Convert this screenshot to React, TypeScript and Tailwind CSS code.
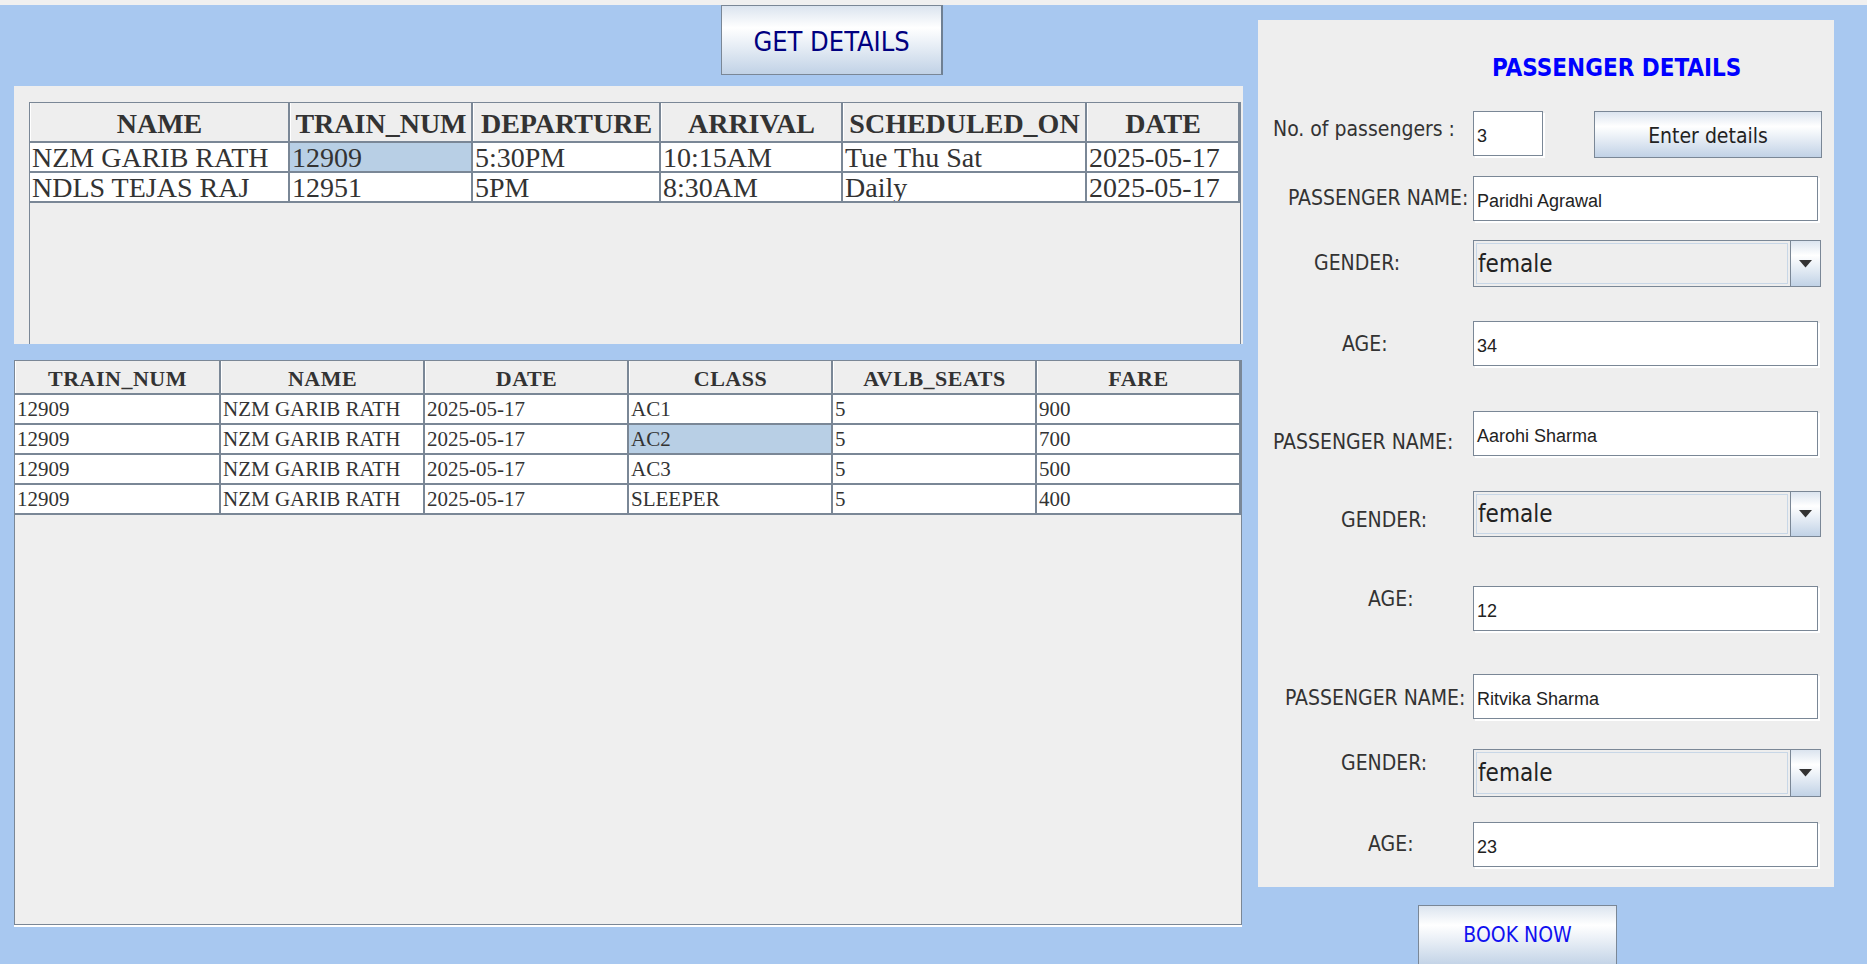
import React from "react";

const serif = "font-['Liberation_Serif','Times_New_Roman',serif]";
const tahoma = "font-['DejaVu_Sans_Condensed','DejaVu_Sans',sans-serif] font-stretch-condensed";
const arial = "font-['Liberation_Sans',Arial,sans-serif]";
const btnBg = "bg-[linear-gradient(180deg,#dbe4ef_0%,#ffffff_32%,#e6edf5_60%,#c1d2e6_100%)]";

const topCols = ["w-[260px]", "w-[183px]", "w-[188px]", "w-[182px]", "w-[244px]", "w-[153px]"];
const topHead = ["NAME", "TRAIN_NUM", "DEPARTURE", "ARRIVAL", "SCHEDULED_ON", "DATE"];
const topRows = [
  ["NZM GARIB RATH", "12909", "5:30PM", "10:15AM", "Tue Thu Sat", "2025-05-17"],
  ["NDLS TEJAS RAJ", "12951", "5PM", "8:30AM", "Daily", "2025-05-17"],
];

const botCols = ["w-[206px]", "w-[204px]", "w-[204px]", "w-[204px]", "w-[204px]", "w-[204px]"];
const botHead = ["TRAIN_NUM", "NAME", "DATE", "CLASS", "AVLB_SEATS", "FARE"];
const botRows = [
  ["12909", "NZM GARIB RATH", "2025-05-17", "AC1", "5", "900"],
  ["12909", "NZM GARIB RATH", "2025-05-17", "AC2", "5", "700"],
  ["12909", "NZM GARIB RATH", "2025-05-17", "AC3", "5", "500"],
  ["12909", "NZM GARIB RATH", "2025-05-17", "SLEEPER", "5", "400"],
];

function TopTable() {
  return (
    <div className={`${serif} text-[#333333]`}>
      <div className="flex h-[40px] border-b-2 border-[#7a8796]">
        {topHead.map((h, i) => (
          <div
            key={h}
            className={`${topCols[i]} shrink-0 h-full bg-[#eeeeee] border-r-2 border-[#7a8796] border-l border-l-white flex items-center justify-center pt-[4px] text-[28px] font-bold whitespace-nowrap overflow-hidden leading-none`}
          >
            {h}
          </div>
        ))}
      </div>
      {topRows.map((r, ri) => (
        <div key={ri} className="flex h-[30px] border-b-2 border-[#7a8796]">
          {r.map((c, ci) => (
            <div
              key={ci}
              className={`${topCols[ci]} shrink-0 h-full border-r-2 border-[#7a8796] flex items-center pl-[2px] pt-[1px] text-[28px] leading-none whitespace-nowrap overflow-hidden ${
                ri === 0 && ci === 1 ? "bg-[#b8cfe5]" : "bg-white"
              }`}
            >
              {c}
            </div>
          ))}
        </div>
      ))}
    </div>
  );
}

function BottomTable() {
  return (
    <div className={`${serif} text-[#333333]`}>
      <div className="flex h-[34px] border-b-2 border-[#7a8796]">
        {botHead.map((h, i) => (
          <div
            key={h}
            className={`${botCols[i]} shrink-0 h-full bg-[#eeeeee] border-r-2 border-[#7a8796] border-l border-l-white flex items-center justify-center pt-[3px] text-[22px] font-bold tracking-[0.5px] whitespace-nowrap overflow-hidden leading-none`}
          >
            {h}
          </div>
        ))}
      </div>
      {botRows.map((r, ri) => (
        <div key={ri} className="flex h-[30px] border-b-2 border-[#7a8796]">
          {r.map((c, ci) => (
            <div
              key={ci}
              className={`${botCols[ci]} shrink-0 h-full border-r-2 border-[#7a8796] flex items-center pl-[2px] text-[21px] leading-none whitespace-nowrap overflow-hidden ${
                ri === 1 && ci === 3 ? "bg-[#b8cfe5]" : "bg-white"
              }`}
            >
              {c}
            </div>
          ))}
        </div>
      ))}
    </div>
  );
}

function Field({ value, w = "w-[345px]" }: { value: string; w?: string }) {
  return (
    <div
      className={`${w} h-[45px] shrink-0 bg-white border border-[#7a8796] shadow-[2px_2px_0_#ffffff] flex items-center pl-[3px] pt-[6px] text-[18px] text-[#222222] ${arial}`}
    >
      {value}
    </div>
  );
}

function Combo({ h = "h-[47px]" }: { h?: string }) {
  return (
    <div className={`w-[348px] ${h} shrink-0 border border-[#7a8796] bg-[#eeeeee] flex`}>
      <div className={`flex-1 m-[2px] border border-[#c8d7e7] flex items-center pl-[1px] text-[24px] text-[#222222] ${tahoma}`}>
        female
      </div>
      <div className={`w-[30px] border-l border-[#7a8796] ${btnBg} flex items-center justify-center`}>
        <svg width="13" height="8" viewBox="0 0 13 8">
          <path d="M0 0H13L6.5 7.5Z" fill="#333333" />
        </svg>
      </div>
    </div>
  );
}

function Label({ text, pl, mt }: { text: string; pl: string; mt: string }) {
  return (
    <div className={`w-[215px] shrink-0 ${pl}`}>
      <div className={`${mt} h-[26px] leading-[26px] text-[21px] text-[#333333] whitespace-nowrap ${tahoma}`}>
        {text}
      </div>
    </div>
  );
}

export default function App() {
  return (
    <div className="w-[1867px] h-[964px] overflow-hidden bg-[#f0f0f0] pt-[5px]">
      <div className="h-[959px] bg-[#a8c8f0] flex">
        <div className="w-[1258px] shrink-0 pl-[14px] flex flex-col">
          <div className="h-[81px] shrink-0 pl-[707px]">
            <button
              className={`w-[222px] h-[70px] border border-[#7a8796] border-r-2 border-r-[#6f8093] ${btnBg} text-[27px] text-[#000080] ${tahoma} flex items-center justify-center pt-[4px]`}
            >
              GET DETAILS
            </button>
          </div>
          <div className="w-[1229px] h-[258px] shrink-0 bg-[#eeeeee] pt-[16px] pl-[15px] overflow-hidden">
            <div className="w-[1212px] h-[242px] border-t border-l border-r border-[#7a8796]">
              <TopTable />
            </div>
          </div>
          <div className="mt-[16px] w-[1228px] h-[565px] shrink-0 border border-[#7a8796] bg-[#efefef] shadow-[0_2px_0_#ffffff]">
            <BottomTable />
          </div>
        </div>

        <div className="flex flex-col pt-[15px]">
          <div className="w-[576px] h-[867px] shrink-0 bg-[#eeeeee] flex flex-col">
            <div className={`mt-[34px] pl-[234px] h-[28px] leading-[28px] text-[24px] font-bold text-[#0000ff] ${tahoma}`}>
              PASSENGER DETAILS
            </div>

            <div className="mt-[29px] flex items-start">
              <Label text="No. of passengers :" pl="pl-[15px]" mt="mt-[5px]" />
              <Field value="3" w="w-[70px]" />
              <button
                className={`ml-[51px] w-[228px] h-[47px] border border-[#7a8796] ${btnBg} text-[21px] text-[#222222] ${tahoma} flex items-center justify-center pt-[5px]`}
              >
                Enter details
              </button>
            </div>

            <div className="mt-[18px] flex items-start">
              <Label text="PASSENGER NAME:" pl="pl-[30px]" mt="mt-[9px]" />
              <Field value="Paridhi Agrawal" />
            </div>
            <div className="mt-[19px] flex items-start">
              <Label text="GENDER:" pl="pl-[56px]" mt="mt-[10px]" />
              <Combo />
            </div>
            <div className="mt-[34px] flex items-start">
              <Label text="AGE:" pl="pl-[84px]" mt="mt-[10px]" />
              <Field value="34" />
            </div>

            <div className="mt-[45px] flex items-start">
              <Label text="PASSENGER NAME:" pl="pl-[15px]" mt="mt-[18px]" />
              <Field value="Aarohi Sharma" />
            </div>
            <div className="mt-[35px] flex items-start">
              <Label text="GENDER:" pl="pl-[83px]" mt="mt-[16px]" />
              <Combo h="h-[46px]" />
            </div>
            <div className="mt-[49px] flex items-start">
              <Label text="AGE:" pl="pl-[110px]" mt="mt-[0px]" />
              <Field value="12" />
            </div>

            <div className="mt-[43px] flex items-start">
              <Label text="PASSENGER NAME:" pl="pl-[27px]" mt="mt-[11px]" />
              <Field value="Ritvika Sharma" />
            </div>
            <div className="mt-[30px] flex items-start">
              <Label text="GENDER:" pl="pl-[83px]" mt="mt-[1px]" />
              <Combo h="h-[48px]" />
            </div>
            <div className="mt-[25px] flex items-start">
              <Label text="AGE:" pl="pl-[110px]" mt="mt-[9px]" />
              <Field value="23" />
            </div>
          </div>

          <button
            className={`ml-[160px] mt-[18px] w-[199px] h-[62px] shrink-0 border border-[#7a8796] ${btnBg} text-[21px] text-[#1010f0] ${tahoma} flex items-center justify-center`}
          >
            BOOK NOW
          </button>
        </div>
      </div>
    </div>
  );
}
